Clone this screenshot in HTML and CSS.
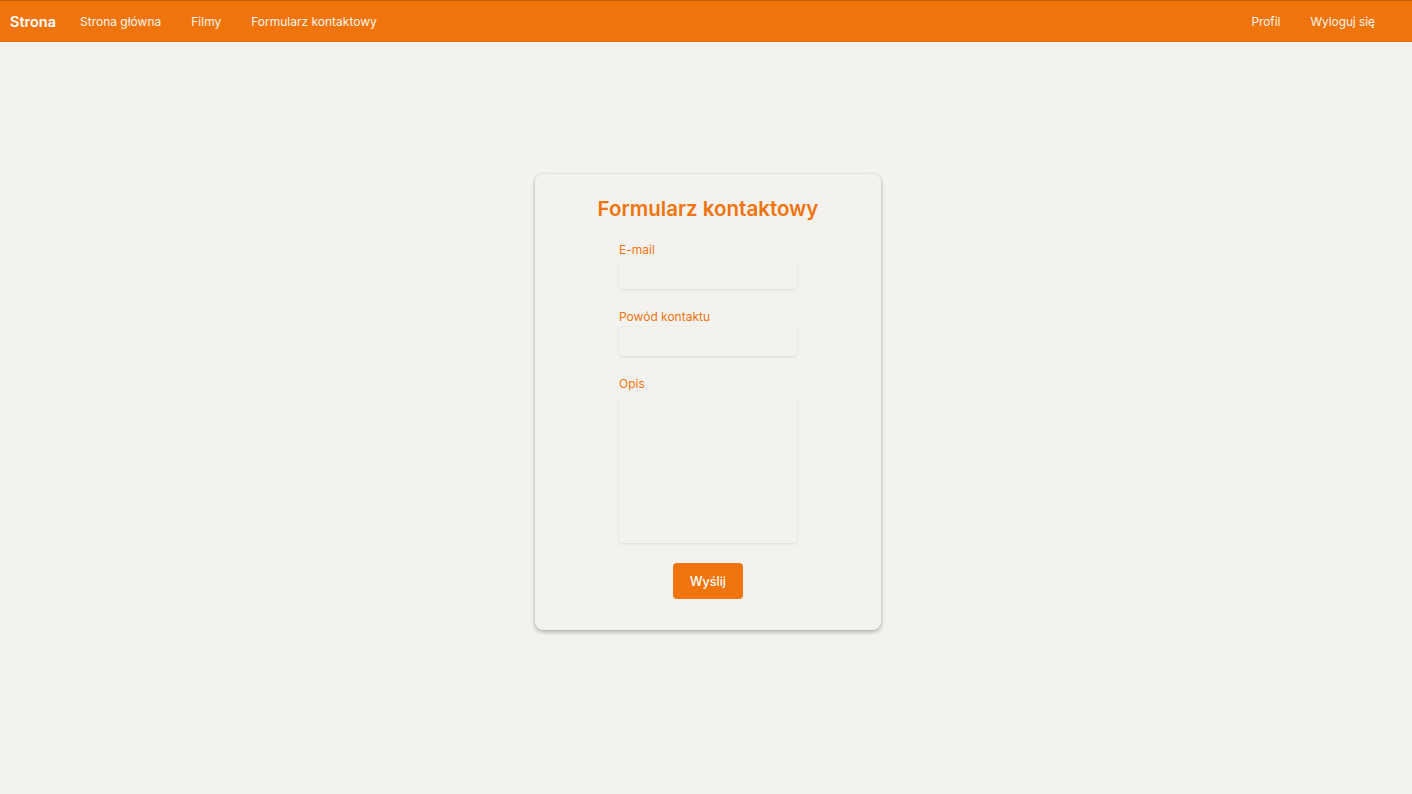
FILE: index.html
```html
<!DOCTYPE html>
<html lang="pl">
<head>
<meta charset="utf-8">
<title>Formularz kontaktowy</title>
<link rel="stylesheet" href="styles.css">
</head>
<body>
<nav class="navbar">
  <div class="nav-left">
    <a class="brand" href="#">Strona</a>
    <a class="nav-link" href="#">Strona główna</a>
    <a class="nav-link" href="#">Filmy</a>
    <a class="nav-link" href="#">Formularz kontaktowy</a>
  </div>
  <div class="nav-right">
    <a class="nav-link" href="#">Profil</a>
    <a class="nav-link" href="#">Wyloguj się</a>
  </div>
</nav>
<main class="main">
  <section class="card">
    <h1 class="title">Formularz kontaktowy</h1>
    <form class="form">
      <label class="label" for="email">E-mail</label>
      <input class="input" id="email" type="email">
      <label class="label" for="reason">Powód kontaktu</label>
      <input class="input" id="reason" type="text">
      <label class="label" for="desc">Opis</label>
      <textarea class="input textarea" id="desc"></textarea>
      <div class="actions"><button class="btn" type="button">Wyślij</button></div>
    </form>
  </section>
</main>
</body>
</html>
```
FILE: styles.css
```css
* { box-sizing: border-box; }
html, body { margin: 0; padding: 0; }
body {
  background: #f3f2ef;
  font-family: "Inter", sans-serif;
  min-height: 794px;
}
.navbar {
  height: 42px;
  background: #f0740c;
  border-top: 1px solid #c9620d;
  display: flex;
  align-items: center;
  justify-content: space-between;
  padding: 0 37px 0 10px;
}
.nav-left, .nav-right { display: flex; align-items: center; }
.brand {
  color: #fff;
  font-weight: 600;
  font-size: 14.5px;
  text-decoration: none;
  margin-right: 24px;
}
.nav-link {
  color: #fff5ec;
  font-size: 12px;
  text-decoration: none;
  margin-right: 30px;
}
.nav-right .nav-link { font-size: 11.8px; margin-right: 30px; }
.nav-left .nav-link:last-child, .nav-right .nav-link:last-child { margin-right: 0; }
.main {
  display: flex;
  justify-content: center;
  padding-top: 132px;
  padding-left: 4px;
}
.card {
  width: 346px;
  background: #f3f2ef;
  border-radius: 8px;
  box-shadow: 0 2px 4px rgba(0,0,0,0.28), 0 0 2px rgba(0,0,0,0.08);
  padding: 21px 84px 31px;
}
.title {
  margin: 0 0 19px;
  font-size: 20.5px;
  line-height: 28px;
  font-weight: 600;
  color: #f0740c;
  text-align: center;
  white-space: nowrap;
  margin-left: -40px;
  margin-right: -40px;
}
.form { display: flex; flex-direction: column; }
.label {
  font-size: 12px;
  line-height: 16px;
  color: #f0740c;
  margin-bottom: 2px;
}
.input {
  height: 29px;
  border: none;
  border-radius: 4px;
  background: #f3f2ef;
  box-shadow: 0 1px 3px rgba(0,0,0,0.1);
  margin-bottom: 20px;
  font-family: inherit;
  outline: none;
}
.textarea {
  height: 147px;
  resize: none;
  margin-top: 2px;
  margin-bottom: 20px;
}
.actions { display: flex; justify-content: center; }
.btn {
  width: 70px;
  height: 36px;
  border: none;
  border-radius: 4px;
  background: #f0740c;
  color: #fff;
  font-family: inherit;
  font-size: 12.5px;
  font-weight: 500;
}
```
